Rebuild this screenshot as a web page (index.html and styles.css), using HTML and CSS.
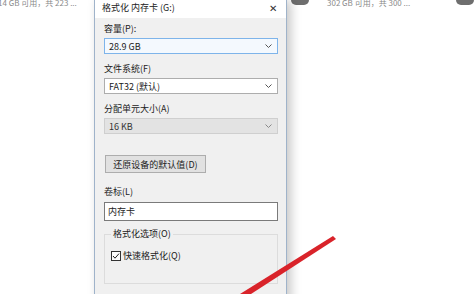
FILE: index.html
```html
<!DOCTYPE html>
<html lang="zh-CN">
<head>
  <meta charset="UTF-8">
  <title>格式化 内存卡 (G:)</title>
  <link rel="stylesheet" href="styles.css">
</head>
<body>
  <div class="screen">
    <div class="side left-side">
      <div class="drive-info">14 GB 可用，共 223 ...</div>
    </div>

    <div class="dialog">
      <div class="title-bar">
        <span class="title">格式化 内存卡 (G:)</span>
        <span class="close">✕</span>
      </div>

      <div class="dialog-body">
        <div class="label first">容量(P):</div>
        <div class="select focused">
          <span>28.9 GB</span>
          <svg class="chev" width="7" height="4" viewBox="0 0 7 4"><path d="M0.5 0.5 L3.5 3.5 L6.5 0.5" fill="none" stroke="#555" stroke-width="1"/></svg>
        </div>

        <div class="label">文件系统(F)</div>
        <div class="select">
          <span>FAT32 (默认)</span>
          <svg class="chev" width="7" height="4" viewBox="0 0 7 4"><path d="M0.5 0.5 L3.5 3.5 L6.5 0.5" fill="none" stroke="#555" stroke-width="1"/></svg>
        </div>

        <div class="label">分配单元大小(A)</div>
        <div class="select disabled">
          <span>16 KB</span>
          <svg class="chev" width="7" height="4" viewBox="0 0 7 4"><path d="M0.5 0.5 L3.5 3.5 L6.5 0.5" fill="none" stroke="#888" stroke-width="1"/></svg>
        </div>

        <button class="restore-btn">还原设备的默认值(D)</button>

        <div class="label volume">卷标(L)</div>
        <div class="textbox">内存卡</div>

        <div class="group">
          <div class="legend">格式化选项(O)</div>
          <div class="check-row">
            <svg class="checkbox" width="10" height="10" viewBox="0 0 10 10">
              <rect x="0.5" y="0.5" width="9" height="9" fill="#fff" stroke="#333"/>
              <path d="M2 5 L4 7.2 L8 2.6" fill="none" stroke="#222" stroke-width="1"/>
            </svg>
            <span>快速格式化(Q)</span>
          </div>
        </div>
      </div>
    </div>

    <div class="side right-side">
      <div class="drive-row">
        <span class="drive-icon"></span>
        <span class="drive-info">302 GB 可用，共 300 ...</span>
        <span class="drive-icon far"></span>
      </div>
    </div>

    <svg class="arrow" width="474" height="294" viewBox="0 0 474 294">
      <polygon points="333,236 336,239 251,294 240,294" fill="#d9232a"/>
    </svg>
  </div>
</body>
</html>
```

FILE: styles.css
```css
body {
  margin: 0;
  background: #fff;
  font-family: "Noto Sans CJK SC", "Noto Sans", sans-serif;
  font-size: 9px;
  color: #1a1a1a;
}

.screen {
  position: relative;
  display: flex;
  width: 474px;
  height: 294px;
  overflow: hidden;
}

.side {
  background: #fff;
}

.left-side {
  width: 94px;
  flex-shrink: 0;
  overflow: hidden;
}

.right-side {
  flex: 1;
  min-width: 0;
  overflow: hidden;
}

.drive-info {
  color: #8a8a8a;
  font-size: 8px;
  line-height: 10px;
  margin-top: -2px;
  white-space: nowrap;
}

.left-side .drive-info {
  margin-left: -2px;
}

.drive-row {
  display: flex;
  align-items: flex-start;
}

.drive-icon {
  flex-shrink: 0;
  width: 18px;
  height: 5px;
  border-radius: 0 0 6px 6px;
  background: #6e6e6e;
  margin-left: 4px;
  margin-right: 18px;
}

.drive-icon.far {
  margin-left: 46px;
  margin-right: 0;
}

/* dialog */
.dialog {
  flex-shrink: 0;
  width: 191px;
  height: 320px;
  border-left: 1px solid #9fb3ca;
  border-right: 1px solid #9fb3ca;
  background: #f0f0f0;
  box-shadow: 4px 0 10px rgba(0, 0, 0, 0.22);
  z-index: 1;
}

.title-bar {
  height: 18px;
  background: #fff;
  display: flex;
  align-items: center;
  justify-content: space-between;
  padding: 0 9px 4px 7px;
  box-sizing: border-box;
}

.title {
  font-size: 9px;
  color: #222;
}

.close {
  font-size: 10px;
  color: #333;
}

.dialog-body {
  padding: 0 8px 0 9px;
}

.label {
  height: 12px;
  line-height: 12px;
  margin-top: 9px;
  margin-bottom: 3px;
  color: #222;
}

.label.first {
  margin-top: 5px;
  margin-bottom: 3px;
}

.select {
  height: 16px;
  box-sizing: border-box;
  border: 1px solid #adadad;
  background: #fff;
  display: flex;
  align-items: center;
  justify-content: space-between;
  padding: 0 5px 0 4px;
}

.select.focused {
  border-color: #7eb4ea;
  background: #f4f9fe;
}

.select.disabled {
  background: #e3e3e3;
  border-color: #cfcfcf;
  color: #333;
}

.restore-btn {
  display: block;
  margin: 21px 0 0 1px;
  width: 101px;
  height: 18px;
  padding: 0;
  font-family: inherit;
  font-size: 9px;
  color: #222;
  background: #e1e1e1;
  border: 1px solid #adadad;
}

.label.volume {
  margin-top: 13px;
  margin-bottom: 4px;
}

.textbox {
  height: 19px;
  box-sizing: border-box;
  border: 1px solid #7a7a7a;
  background: #fff;
  line-height: 17px;
  padding-left: 3px;
}

.group {
  margin-top: 13px;
  height: 48px;
  border: 1px solid #dcdcdc;
  position: relative;
  padding: 0 6px;
}

.legend {
  background: #f0f0f0;
  display: inline-block;
  padding: 0 2px;
  margin-top: -7px;
  line-height: 12px;
  vertical-align: top;
}

.check-row {
  display: flex;
  align-items: center;
  gap: 2px;
  margin-top: 1px;
}

.checkbox {
  display: block;
}

.arrow {
  position: absolute;
  left: 0;
  top: 0;
  z-index: 2;
  pointer-events: none;
}
```
